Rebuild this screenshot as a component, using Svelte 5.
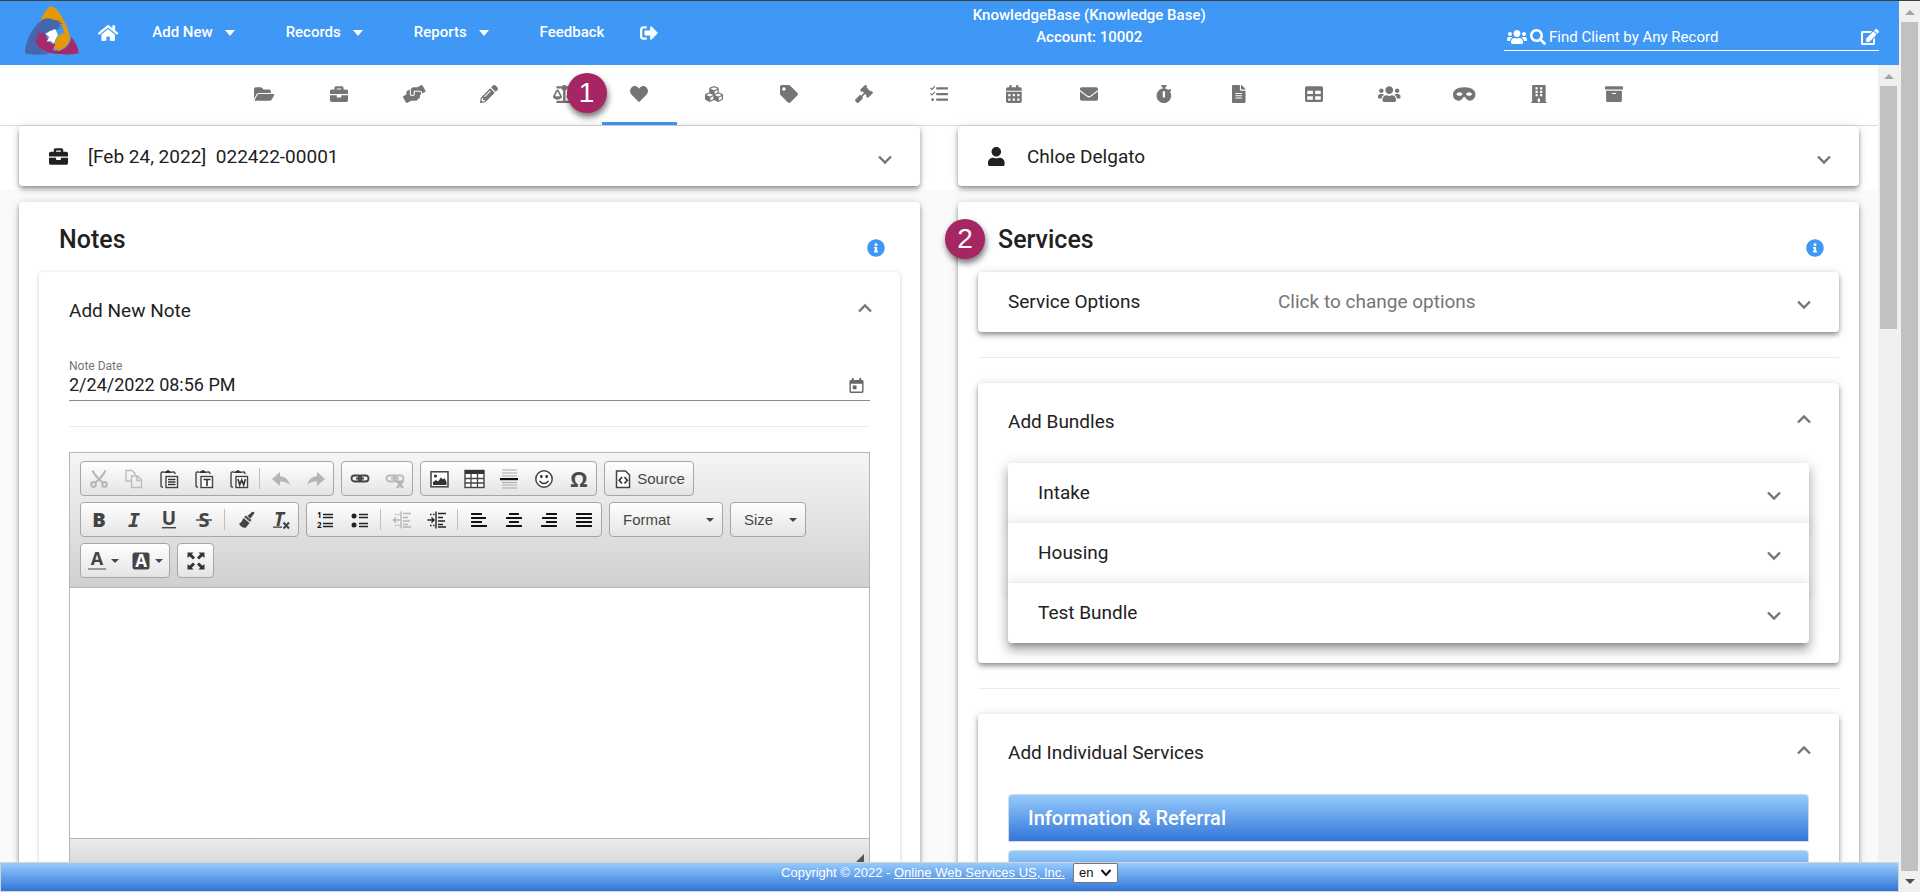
<script>
  const icons = {
    home: [576, 'M280.37 148.26L96 300.11V464a16 16 0 0 0 16 16l112.06-.29a16 16 0 0 0 15.92-16V368a16 16 0 0 1 16-16h64a16 16 0 0 1 16 16v95.64a16 16 0 0 0 16 16.05L464 480a16 16 0 0 0 16-16V300L295.67 148.26a12.19 12.19 0 0 0-15.3 0zM571.6 251.47L488 182.56V44.05a12 12 0 0 0-12-12h-56a12 12 0 0 0-12 12v72.61L318.47 43a48 48 0 0 0-61 0L4.34 251.47a12 12 0 0 0-1.6 16.9l25.5 31A12 12 0 0 0 45.15 301l235.22-193.74a12.19 12.19 0 0 1 15.3 0L530.9 301a12 12 0 0 0 16.9-1.6l25.5-31a12 12 0 0 0-1.7-16.93z'],
    signout: [512, 'M497 273L329 441c-15 15-41 4.5-41-17v-96H152c-13.3 0-24-10.7-24-24v-96c0-13.3 10.7-24 24-24h136V88c0-21.4 25.9-32 41-17l168 168c9.3 9.4 9.3 24.6 0 34zM192 436v-40c0-6.6-5.4-12-12-12H96c-17.7 0-32-14.3-32-32V160c0-17.7 14.3-32 32-32h84c6.6 0 12-5.4 12-12V76c0-6.6-5.4-12-12-12H96c-53 0-96 43-96 96v192c0 53 43 96 96 96h84c6.6 0 12-5.4 12-12z'],
    search: [512, 'M505 442.7L405.3 343c-4.5-4.5-10.6-7-17-7H372c27.6-35.3 44-79.7 44-128C416 93.1 322.9 0 208 0S0 93.1 0 208s93.1 208 208 208c48.3 0 92.7-16.4 128-44v16.3c0 6.4 2.5 12.5 7 17l99.7 99.7c9.4 9.4 24.6 9.4 33.9 0l28.3-28.3c9.4-9.4 9.4-24.6.1-34zM208 336c-70.7 0-128-57.2-128-128 0-70.7 57.2-128 128-128 70.7 0 128 57.2 128 128 0 70.7-57.2 128-128 128z'],
    edit: [576, 'M402.6 83.2l90.2 90.2c3.8 3.8 3.8 10 0 13.8L274.4 405.6l-92.8 10.3c-12.4 1.4-22.9-9.1-21.5-21.5l10.3-92.8L388.8 83.2c3.8-3.8 10-3.8 13.8 0zm162-22.9l-48.8-48.8c-15.2-15.2-39.9-15.2-55.2 0l-35.4 35.4c-3.8 3.8-3.8 10 0 13.8l90.2 90.2c3.8 3.8 10 3.8 13.8 0l35.4-35.4c15.2-15.3 15.2-40 0-55.2zM384 346.2V448H64V128h229.8c3.2 0 6.2-1.3 8.5-3.5l40-40c7.6-7.6 2.2-20.5-8.5-20.5H48C21.5 64 0 85.5 0 112v352c0 26.5 21.5 48 48 48h352c26.5 0 48-21.5 48-48V306.2c0-10.7-12.9-16-20.5-8.5l-40 40c-2.2 2.3-3.5 5.3-3.5 8.5z'],
    user: [448, 'M224 256c70.7 0 128-57.3 128-128S294.7 0 224 0 96 57.3 96 128s57.3 128 128 128zm89.6 32h-16.7c-22.2 10.2-46.9 16-72.9 16s-50.6-5.8-72.9-16h-16.7C60.2 288 0 348.2 0 422.4V464c0 26.5 21.5 48 48 48h352c26.5 0 48-21.5 48-48v-41.6c0-74.2-60.2-134.4-134.4-134.4z'],
    info: [512, 'M256 8C119.043 8 8 119.083 8 256c0 136.997 111.043 248 248 248s248-111.003 248-248C504 119.083 392.957 8 256 8zm0 110c23.196 0 42 18.804 42 42s-18.804 42-42 42-42-18.804-42-42 18.804-42 42-42zm56 254c0 6.627-5.373 12-12 12h-88c-6.627 0-12-5.373-12-12v-24c0-6.627 5.373-12 12-12h12v-64h-12c-6.627 0-12-5.373-12-12v-24c0-6.627 5.373-12 12-12h64c6.627 0 12 5.373 12 12v100h12c6.627 0 12 5.373 12 12v24z'],
    folder: [576, 'M572.694 292.093L500.27 416.248A63.997 63.997 0 0 1 444.989 448H45.025c-18.523 0-30.064-20.093-20.731-36.093l72.424-124.155A64 64 0 0 1 152 256h399.964c18.523 0 30.064 20.093 20.73 36.093zM152 224h328v-48c0-26.51-21.49-48-48-48H272l-64-64H48C21.49 64 0 85.49 0 112v278.046l69.077-118.418C86.214 242.25 117.989 224 152 224z'],
    briefcase: [512, 'M320 336c0 8.84-7.16 16-16 16h-96c-8.84 0-16-7.16-16-16v-48H0v144c0 25.6 22.4 48 48 48h416c25.6 0 48-22.4 48-48V288H320v48zm144-208h-80V80c0-25.6-22.4-48-48-48H176c-25.6 0-48 22.4-48 48v48H48c-25.6 0-48 22.4-48 48v80h512v-80c0-25.6-22.4-48-48-48zm-144 0H192V96h128v32z'],
    hands: [640, 'M488 192H336v56c0 39.7-32.3 72-72 72s-72-32.3-72-72V126.4l-64.9 39C107.8 176.9 96 197.8 96 220.2v47.3l-80 46.2C.7 322.5-4.6 342.1 4.3 357.4l80 138.6c8.8 15.3 28.4 20.5 43.7 11.7L231.4 448H368c35.3 0 64-28.7 64-64h16c17.7 0 32-14.3 32-32v-64h8c13.3 0 24-10.7 24-24v-48c0-13.3-10.7-24-24-24zm147.7-37.4L555.7 16C546.9.7 527.3-4.5 512 4.3L408.6 64H306.4c-12 0-23.7 3.4-33.9 9.7L239 94.6c-9.4 5.8-15 16.1-15 27.1V248c0 22.1 17.9 40 40 40s40-17.9 40-40v-88h184c30.9 0 56 25.1 56 56v28.5l80-46.2c15.3-8.9 20.5-28.4 11.7-43.7z'],
    pencil: [512, 'M497.9 142.1l-46.1 46.1c-4.7 4.7-12.3 4.7-17 0l-111-111c-4.7-4.7-4.7-12.3 0-17l46.1-46.1c18.7-18.7 49.1-18.7 67.9 0l60.1 60.1c18.8 18.7 18.8 49.1 0 67.9zM284.2 99.8L21.6 362.4.4 483.9c-2.9 16.4 11.4 30.6 27.8 27.8l121.5-21.3 262.6-262.6c4.7-4.7 4.7-12.3 0-17l-111-111c-4.8-4.7-12.4-4.7-17.1 0zM124.1 339.9c-5.5-5.5-5.5-14.3 0-19.8l154-154c5.5-5.5 14.3-5.5 19.8 0s5.5 14.3 0 19.8l-154 154c-5.5 5.5-14.3 5.5-19.8 0zM88 424h48v36.3l-64.5 11.3-31.1-31.1L51.7 376H88v48z'],
    scale: [640, 'M256 336h-.02c0-16.18 1.34-8.73-85.05-181.51-17.65-35.29-68.19-35.36-85.87 0C-2.06 328.75.02 320.33.02 336H0c0 44.18 57.31 80 128 80s128-35.82 128-80zM128 176l72 144H56l72-144zm511.98 160c0-16.18 1.34-8.73-85.05-181.51-17.65-35.29-68.19-35.36-85.87 0-87.12 174.26-85.04 165.84-85.04 181.51H384c0 44.18 57.31 80 128 80s128-35.82 128-80h-.02zM440 320l72-144 72 144H440zm88 128H352V153.25c23.51-10.29 41.16-31.48 46.39-57.25H528c8.84 0 16-7.16 16-16V48c0-8.84-7.16-16-16-16H383.64C369.04 12.68 346.09 0 320 0s-49.04 12.68-63.64 32H112c-8.84 0-16 7.16-16 16v32c0 8.84 7.16 16 16 16h129.61c5.23 25.76 22.87 46.96 46.39 57.25V448H112c-8.84 0-16 7.16-16 16v32c0 8.84 7.16 16 16 16h416c8.84 0 16-7.16 16-16v-32c0-8.84-7.16-16-16-16z'],
    heart: [512, 'M462.3 62.6C407.5 15.9 326 24.3 275.7 76.2L256 96.5l-19.7-20.3C186.1 24.3 104.5 15.9 49.7 62.6c-62.8 53.6-66.1 149.8-9.9 207.9l193.5 199.8c12.5 12.9 32.8 12.9 45.3 0l193.5-199.8c56.3-58.1 53-154.3-9.8-207.9z'],
    cubes: [512, 'M488.6 250.2L392 214V105.5c0-15-9.3-28.4-23.4-33.7l-100-37.5c-8.1-3.1-17.1-3.1-25.3 0l-100 37.5c-14.1 5.3-23.4 18.7-23.4 33.7V214l-96.6 36.2C9.3 255.5 0 268.9 0 283.9V394c0 13.6 7.7 26.1 19.9 32.2l100 50c10.1 5.1 22.1 5.1 32.2 0l103.9-52 103.9 52c10.1 5.1 22.1 5.1 32.2 0l100-50c12.2-6.1 19.9-18.6 19.9-32.2V283.9c0-15-9.3-28.4-23.4-33.7zM358 214.8l-85 31.9v-68.2l85-37v73.3zM154 104.1l102-38.2 102 38.2v.6l-102 41.4-102-41.4v-.6zm84 291.1l-85 42.5v-79.1l85-38.8v75.4zm0-112l-102 41.4-102-41.4v-.6l102-38.2 102 38.2v.6zm240 112l-85 42.5v-79.1l85-38.8v75.4zm0-112l-102 41.4-102-41.4v-.6l102-38.2 102 38.2v.6z'],
    tag: [512, 'M0 252.118V48C0 21.49 21.49 0 48 0h204.118a48 48 0 0 1 33.941 14.059l211.882 211.882c18.745 18.745 18.745 49.137 0 67.882L293.823 497.941c-18.745 18.745-49.137 18.745-67.882 0L14.059 286.059A48 48 0 0 1 0 252.118zM112 64c-26.51 0-48 21.49-48 48s21.49 48 48 48 48-21.49 48-48-21.49-48-48-48z'],
    gavel: [512, 'M504.971 199.362l-22.627-22.627c-9.373-9.373-24.569-9.373-33.941 0l-5.657 5.657L329.608 69.255l5.657-5.657c9.373-9.373 9.373-24.569 0-33.941L312.638 7.029c-9.373-9.373-24.569-9.373-33.941 0L154.246 131.48c-9.373 9.373-9.373 24.569 0 33.941l22.627 22.627c9.373 9.373 24.569 9.373 33.941 0l5.657-5.657 39.598 39.598-81.04 81.04-5.657-5.657c-12.497-12.497-32.758-12.497-45.255 0L9.373 412.118c-12.497 12.497-12.497 32.758 0 45.255l45.255 45.255c12.497 12.497 32.758 12.497 45.255 0l114.745-114.745c12.497-12.497 12.497-32.758 0-45.255l-5.657-5.657 81.04-81.04 39.598 39.598-5.657 5.657c-9.373 9.373-9.373 24.569 0 33.941l22.627 22.627c9.373 9.373 24.569 9.373 33.941 0l124.451-124.451c9.372-9.372 9.372-24.568 0-33.941z'],
    tasks: [512, 'M0 92l24-24 32 32 72-76 24 24-96 100zM0 252l24-24 32 32 72-76 24 24-96 100zM32 416a40 40 0 1 0 80 0a40 40 0 1 0-80 0zM192 64h304a16 16 0 0 1 16 16v32a16 16 0 0 1-16 16H192a16 16 0 0 1-16-16V80a16 16 0 0 1 16-16zM192 224h304a16 16 0 0 1 16 16v32a16 16 0 0 1-16 16H192a16 16 0 0 1-16-16v-32a16 16 0 0 1 16-16zM192 384h304a16 16 0 0 1 16 16v32a16 16 0 0 1-16 16H192a16 16 0 0 1-16-16v-32a16 16 0 0 1 16-16z'],
    calendar: [448, 'M0 160v-48a48 48 0 0 1 48-48h48V12a12 12 0 0 1 12-12h40a12 12 0 0 1 12 12v52h128V12a12 12 0 0 1 12-12h40a12 12 0 0 1 12 12v52h48a48 48 0 0 1 48 48v48zM0 192h448v272a48 48 0 0 1-48 48H48a48 48 0 0 1-48-48zM64 256v64h64v-64zM192 256v64h64v-64zM320 256v64h64v-64zM64 384v64h64v-64zM192 384v64h64v-64zM320 384v64h64v-64z'],
    envelope: [512, 'M502.3 190.8c3.9-3.1 9.7-.2 9.7 4.7V400c0 26.5-21.5 48-48 48H48c-26.5 0-48-21.5-48-48V195.6c0-5 5.7-7.8 9.7-4.7 22.4 17.4 52.1 39.5 154.1 113.6 21.1 15.4 56.7 47.8 92.2 47.6 35.7.3 72-32.8 92.3-47.6 102-74.1 131.6-96.3 154-113.7zM256 320c23.2.4 56.6-29.2 73.4-41.4 132.7-96.3 142.8-104.7 173.4-128.7 5.8-4.5 9.2-11.5 9.2-18.9v-19c0-26.5-21.5-48-48-48H48c-26.5 0-48 21.5-48 48v19c0 7.4 3.4 14.3 9.2 18.9 30.6 23.9 40.7 32.4 173.4 128.7 16.8 12.2 50.2 41.8 73.4 41.4z'],
    stopwatch: [448, 'M432 304c0 114.9-93.1 208-208 208S16 418.9 16 304c0-104 76.3-190.2 176-205.5V64h-28c-6.6 0-12-5.4-12-12V12c0-6.6 5.4-12 12-12h120c6.6 0 12 5.4 12 12v40c0 6.6-5.4 12-12 12h-28v34.5c37.5 5.8 71.7 21.6 99.7 44.6l27.5-27.5c4.7-4.7 12.3-4.7 17 0l28.3 28.3c4.7 4.7 4.7 12.3 0 17l-29.4 29.4-.6.6C419.7 223.3 432 262.2 432 304zm-176 36V188.5c0-6.6-5.4-12-12-12h-40c-6.6 0-12 5.4-12 12V340c0 6.6 5.4 12 12 12h40c6.6 0 12-5.4 12-12z'],
    file: [384, 'M224 136V0H24C10.7 0 0 10.7 0 24v464c0 13.3 10.7 24 24 24h336c13.3 0 24-10.7 24-24V160H248c-13.2 0-24-10.8-24-24zm64 236c0 6.6-5.4 12-12 12H108c-6.6 0-12-5.4-12-12v-8c0-6.6 5.4-12 12-12h168c6.6 0 12 5.4 12 12v8zm0-64c0 6.6-5.4 12-12 12H108c-6.6 0-12-5.4-12-12v-8c0-6.6 5.4-12 12-12h168c6.6 0 12 5.4 12 12v8zm0-72v8c0 6.6-5.4 12-12 12H108c-6.6 0-12-5.4-12-12v-8c0-6.6 5.4-12 12-12h168c6.6 0 12 5.4 12 12zm96-114.1v6.1H256V0h6.1c6.4 0 12.5 2.5 17 7l97.9 98c4.5 4.5 7 10.6 7 16.9z'],
    table: [512, 'M464 32H48C21.49 32 0 53.49 0 80v352c0 26.51 21.49 48 48 48h416c26.51 0 48-21.49 48-48V80c0-26.51-21.49-48-48-48zM224 416H64v-96h160v96zm0-160H64v-96h160v96zm224 160H288v-96h160v96zm0-160H288v-96h160v96z'],
    users: [640, 'M96 224c35.3 0 64-28.7 64-64s-28.7-64-64-64-64 28.7-64 64 28.7 64 64 64zm448 0c35.3 0 64-28.7 64-64s-28.7-64-64-64-64 28.7-64 64 28.7 64 64 64zm32 32h-64c-17.6 0-33.5 7.1-45.1 18.6 40.3 22.1 68.9 62 75.1 109.4h66c17.7 0 32-14.3 32-32v-32c0-35.3-28.7-64-64-64zm-256 0c61.9 0 112-50.1 112-112S381.9 32 320 32 208 82.1 208 144s50.1 112 112 112zm76.8 32h-8.3c-20.8 10-43.9 16-68.5 16s-47.6-6-68.5-16h-8.3C179.6 288 128 339.6 128 403.2V432c0 26.5 21.5 48 48 48h288c26.5 0 48-21.5 48-48v-28.8c0-63.6-51.6-115.2-115.2-115.2zm-223.7-13.4C161.5 263.1 145.6 256 128 256H64c-35.3 0-64 28.7-64 64v32c0 17.7 14.3 32 32 32h65.9c6.3-47.4 34.9-87.3 75.2-109.4z'],
    mask: [640, 'M320.67 64c-442.6 0-357.57 384-158.46 384 39.9 0 77.47-20.69 101.42-55.86l25.73-37.79c15.66-22.99 46.97-22.99 62.63 0l25.73 37.79C401.66 427.31 439.23 448 479.13 448c189.86 0 290.63-384-158.46-384zM184 308.36c-41.06 0-67.76-25.66-80.08-41.05-5.23-6.53-5.23-16.09 0-22.63 12.32-15.4 39.01-41.05 80.08-41.05s67.76 25.66 80.08 41.05c5.23 6.53 5.23 16.09 0 22.63-12.32 15.4-39.02 41.05-80.08 41.05zm272 0c-41.06 0-67.76-25.66-80.08-41.05-5.23-6.53-5.23-16.09 0-22.63 12.32-15.4 39.01-41.05 80.08-41.05s67.76 25.66 80.08 41.05c5.23 6.53 5.23 16.09 0 22.63-12.32 15.4-39.02 41.05-80.08 41.05z'],
    building: [448, 'M436 480h-20V24a24 24 0 0 0-24-24H56a24 24 0 0 0-24 24v456H12a12 12 0 0 0-12 12v20h448v-20a12 12 0 0 0-12-12zM128 64h64v64h-64zM256 64h64v64h-64zM128 160h64v64h-64zM256 160h64v64h-64zM128 256h64v64h-64zM256 256h64v64h-64zM192 384h64v96h-64z'],
    archive: [512, 'M32 448c0 17.7 14.3 32 32 32h384c17.7 0 32-14.3 32-32V160H32v288zm160-212c0-6.6 5.4-12 12-12h104c6.6 0 12 5.4 12 12v8c0 6.6-5.4 12-12 12H204c-6.6 0-12-5.4-12-12v-8zM480 32H32C14.3 32 0 46.3 0 64v48c0 8.8 7.2 16 16 16h480c8.8 0 16-7.2 16-16V64c0-17.7-14.3-32-32-32z'],
  };

  const tabs = ['folder', 'briefcase', 'hands', 'pencil', 'scale', 'heart', 'cubes', 'tag', 'gavel', 'tasks', 'calendar', 'envelope', 'stopwatch', 'file', 'table', 'users', 'mask', 'building', 'archive'];
  const menus = ['Add New', 'Records', 'Reports'];
  const bundles = ['Intake', 'Housing', 'Test Bundle'];

  const clip = '<path d="M5 3H3.500Q2 3 2 4.500V17M13 3h1.500Q16 3 16 4.500V5M2 17q0 1 1 1h1" fill="none" stroke="#444" stroke-width="1.400"/><path d="M5 4q0-2 2.500-2 1.500-2 3 0Q13 2 13 4z" fill="#333"/><rect x="7" y="7.500" width="11.500" height="11" fill="#fff" stroke="#444" stroke-width="1.400"/>';
  const lines = (rows) => rows.map(([x, y, w]) => `<rect x="${x}" y="${y}" width="${w}" height="2" rx="0.500" fill="#111"/>`).join('');
  const link = (c) => `<g fill="none" stroke="${c}" stroke-width="1.800"><rect x="1.500" y="6.500" width="10" height="6" rx="3"/><rect x="8.500" y="6.500" width="10" height="6" rx="3"/></g><path d="M6 9.500h8" stroke="${c}" stroke-width="1.800"/>`;
  const dent = (c, arrow) => `<g stroke="${c}" stroke-width="1.400" fill="none"><path d="M9 1.500v17"/><path d="M3 4.500h5M3 15.500h5" stroke-dasharray="1.500 1.500"/><path d="M11 3.500h8M11 7.500h5M11 11h7M11 14.500h5M11 17h8"/>${arrow}</g>`;

  const art = {
    Cut: '<g fill="none" stroke="#b8b8b8" stroke-width="2.200"><circle cx="4.500" cy="15.500" r="2.300"/><circle cx="15.500" cy="15.500" r="2.300"/><path d="M3.500 1.500Q6 7 14 14M16.500 1.500Q14 7 6 14"/></g>',
    Copy: '<g fill="none" stroke="#bbb" stroke-width="1.400"><path d="M7 12H2V1.500h6l3 3V6"/><path d="M7.500 7h6l4 4v7.500h-10z"/><path d="M13 7v4.500h4.500"/></g>',
    Paste: clip + '<path d="M9 10.500h7.500M9 13h7.500M9 15.500h7.500" stroke="#333" stroke-width="1.300"/>',
    'Paste as plain text': clip + '<path d="M9.500 10.500h7M13 10.500v6.500" stroke="#333" stroke-width="1.600"/>',
    'Paste from Word': clip + '<path d="M9 10l1.700 6 2-5 2 5 1.800-6" fill="none" stroke="#333" stroke-width="1.600"/>',
    Undo: '<path d="M1 10l8-7v4q8 1 10 9-4-4-10-3.500V17z" fill="#b5b5b5"/>',
    Redo: '<path d="M19 10l-8-7v4q-8 1-10 9 4-4 10-3.500V17z" fill="#b5b5b5"/>',
    Link: link('#444'),
    Unlink: link('#bbb') + '<path d="M12 12l6 7M18 12l-6 7" stroke="#b0b0b0" stroke-width="2"/>',
    Image: '<rect x="2" y="2.800" width="17" height="15" fill="#fff" stroke="#444" stroke-width="1.500"/><circle cx="6.500" cy="7" r="1.600" fill="#333"/><path d="M4 16v-3l3-2 2 1.500 3-4 2 2 1.500-1.500L17.500 13v3z" fill="#333"/>',
    Table: '<rect x="1" y="1.500" width="19" height="17" fill="#fff" stroke="#444" stroke-width="1.400"/><rect x="1" y="1" width="19" height="4" fill="#333"/><path d="M1 9.500h19M1 14h19M7 5v14M13.500 5v14" stroke="#444" stroke-width="1.300"/>',
    'Horizontal line': '<path d="M3 1h15M3 4h15M3 7h15M3 13.500h15M3 16h15M3 19h15" stroke="#aaa" stroke-width="1.200"/><rect x="1" y="9" width="18" height="2.200" fill="#111"/>',
    Smiley: '<circle cx="10" cy="10" r="8.200" fill="#fff" stroke="#444" stroke-width="1.500"/><ellipse cx="7.300" cy="7.500" rx="1.300" ry="1.700" fill="#333"/><ellipse cx="12.700" cy="7.500" rx="1.300" ry="1.700" fill="#333"/><path d="M5.500 12q4.500 5 9 0" fill="none" stroke="#333" stroke-width="1.400"/>',
    'Special character': '<text x="10" y="18" text-anchor="middle" font-family="Open Sans, sans-serif" font-weight="700" font-size="22" fill="#4a4a4a">Ω</text>',
    Source: '<path d="M3.500 2h9l4 4v12.500h-13z" fill="#fff" stroke="#444" stroke-width="1.500"/><path d="M9 8l-2.800 3.200L9 14.500M11.500 8l2.800 3.200-2.800 3.300" fill="none" stroke="#333" stroke-width="1.700"/>',
    Bold: '<text x="10" y="17" text-anchor="middle" font-family="Open Sans, sans-serif" font-weight="800" font-size="20" fill="#444">B</text>',
    Italic: '<text x="10" y="17" text-anchor="middle" font-family="DejaVu Sans Mono, monospace" font-weight="700" font-style="italic" font-size="20" fill="#444">I</text>',
    Underline: '<text x="10" y="15" text-anchor="middle" font-family="Open Sans, sans-serif" font-weight="700" font-size="19" fill="#444">U</text><rect x="3" y="17" width="14" height="1.400" fill="#444"/>',
    Strike: '<text x="10" y="17" text-anchor="middle" font-family="Open Sans, sans-serif" font-weight="700" font-size="20" fill="#444">S</text><rect x="2" y="9.300" width="16" height="1.400" fill="#444"/>',
    'Copy formatting': '<path d="M16 2q2-1 2.500 1l-4 5.500-3-2.500z" fill="#444"/><path d="M10 5.500l5.500 4.500-1.500 2-6-5z" fill="#555"/><path d="M7.500 8l6 5-3.500 4.500q-4 1-7-3.500 3-2 4.500-6z" fill="#444"/>',
    'Remove format': '<text x="8" y="15.500" text-anchor="middle" font-family="Open Sans, sans-serif" font-style="italic" font-weight="700" font-size="19" fill="#444">T</text><rect x="2" y="16.500" width="9" height="1.300" fill="#444"/><path d="M12.500 12.500l5.500 6M18 12.500l-5.500 6" stroke="#444" stroke-width="2"/>',
    'Numbered list': '<text x="2" y="8" font-family="Open Sans, sans-serif" font-weight="700" font-size="8" fill="#111">1</text><text x="2" y="18" font-family="Open Sans, sans-serif" font-weight="700" font-size="8" fill="#111">2</text><path d="M8 4.500h10M8 7.500h10M8 13.500h10M8 16.500h10" stroke="#222" stroke-width="1.500"/>',
    'Bulleted list': '<circle cx="4" cy="6" r="2.500" fill="#222"/><circle cx="4" cy="15" r="2.500" fill="#222"/><path d="M9 4.500h9M9 7.500h9M9 13.500h9M9 16.500h9" stroke="#222" stroke-width="1.500"/>',
    Outdent: dent('#b5b5b5', '<path d="M8 10H1.500M4 7.500L1.500 10 4 12.500"/>'),
    Indent: dent('#222', '<path d="M0.500 10H7M4.500 7.500L7 10l-2.500 2.500"/>'),
    'Align left': lines([[2, 3, 11], [2, 7, 15], [2, 11, 11], [2, 15, 16]]),
    Center: lines([[5, 3, 10], [2, 7, 16], [5, 11, 10], [2, 15, 16]]),
    'Align right': lines([[7, 3, 11], [3, 7, 15], [7, 11, 11], [2, 15, 16]]),
    Justify: lines([[2, 3, 16], [2, 7, 16], [2, 11, 16], [2, 15, 16]]),
    Maximize: '<g fill="#333"><path d="M1.500 1.500h6L5.800 3.300 9 6.500 7 8.500 3.500 5.200 1.500 7zM18.500 1.500h-6l1.700 1.800L11 6.500l2 2 3.500-3.300 2 1.800zM1.500 18.500h6l-1.700-1.800L9 13.500l-2-2-3.500 3.300-2-1.800zM18.500 18.500h-6l1.700-1.800-3.200-3.200 2-2 3.500 3.300 2-1.800z"/></g>',
    'Text color': '<text x="10" y="14" text-anchor="middle" font-family="Open Sans, sans-serif" font-weight="700" font-size="18" fill="#444">A</text><rect x="1" y="17" width="18" height="2" fill="#999"/>',
    'Background color': '<rect x="1.500" y="1.500" width="17" height="17" rx="2.500" fill="#444"/><text x="10" y="16" text-anchor="middle" font-family="Open Sans, sans-serif" font-weight="700" font-size="17" fill="#fff">A</text>',
  };

  const clipboard = ['Cut', 'Copy', 'Paste', 'Paste as plain text', 'Paste from Word', '|', 'Undo', 'Redo'];
  const links = ['Link', 'Unlink'];
  const inserts = ['Image', 'Table', 'Horizontal line', 'Smiley', 'Special character'];
  const styles = ['Bold', 'Italic', 'Underline', 'Strike', '|', 'Copy formatting', 'Remove format'];
  const paragraph = ['Numbered list', 'Bulleted list', '|', 'Outdent', 'Indent', '|', 'Align left', 'Center', 'Align right', 'Justify'];

  let noteDate = $state('2/24/2022 08:56 PM');
  let client = $state('');
</script>

{#snippet fa(name, size)}
  <svg class="fa {size}" viewBox="0 0 {icons[name][0]} 512" aria-hidden="true"><path fill-rule="evenodd" d={icons[name][1]} /></svg>
{/snippet}

{#snippet chevron(open)}
  <svg class="chevron" class:open viewBox="0 0 14 20" aria-hidden="true"><path d="M1 9.500l6 6 6-6" /></svg>
{/snippet}

{#snippet tool(name)}
  <svg class="tool" viewBox="0 0 20 20" aria-hidden="true">{@html art[name]}</svg>
{/snippet}

{#snippet group(items)}
  <div class="group">
    {#each items as item}
      {#if item === '|'}
        <span class="sep"></span>
      {:else}
        <button class="tb" aria-label={item}>{@render tool(item)}</button>
      {/if}
    {/each}
  </div>
{/snippet}

<div class="window">
  <div class="app">
    <header class="top">
      <svg class="logo" viewBox="0 0 168 150" role="img" aria-label="Logo">
        <path d="M81 4C72 5 58 26 48 50L90 46 112 60 118 72 122 84C108 84 98 100 94 108L90 130 96 136 106 128 102 138 110 138 118 128 124 126C134 116 138 106 138 98C132 62 104 8 81 4z" fill="#e59a05" />
        <path d="M3 143C2 118 22 66 54 45C66 38 80 40 92 45L110 48 102 52 118 54 104 59 116 64 100 66 110 72 92 72C84 72 76 82 66 92L40 112C46 130 60 140 74 147C46 150 10 150 3 143z" fill="#4568ad" />
        <path d="M164 143C164 128 152 108 142 96C140 112 132 122 120 132L104 138 86 136 94 116C82 118 74 112 68 96L50 74 56 92 40 76 48 98 33 86 44 106 33 100C32 118 50 132 68 142C96 150 160 150 164 143z" fill="#a62a69" />
        <path d="M78 78L94 73 102 90 94 104 90 116 80 108 68 110 76 96 64 86z" fill="#fff" />
      </svg>
      <nav class="nav" aria-label="Main">
        <a class="home" href="#home" aria-label="Home">{@render fa('home', 's18')}</a>
        {#each menus as menu}
          <button class="menu">{menu}<span class="caret"></span></button>
        {/each}
        <a class="feedback" href="#feedback">Feedback</a>
        <a class="out" href="#logout" aria-label="Log out">{@render fa('signout', 's18')}</a>
      </nav>
      <div class="account">KnowledgeBase (Knowledge Base)<br />Account: 10002</div>
      <div class="search">
        <label for="client" aria-label="Find client">{@render fa('users', 's16')}{@render fa('search', 's16')}</label>
        <input id="client" type="text" placeholder="Find Client by Any Record" bind:value={client} />
        <button class="edit" aria-label="Edit search">{@render fa('edit', 's16')}</button>
      </div>
    </header>

    <div class="body">
      <div class="page">
        <nav class="tabs" aria-label="Sections">
          {#each tabs as tab}
            <a href="#{tab}" class="tab" class:active={tab === 'heart'} aria-label={tab}>
              {@render fa(tab, 's18')}
              {#if tab === 'heart'}<span class="badge on-tab">1</span>{/if}
            </a>
          {/each}
        </nav>

        <div class="strip">
          <button class="card head">
            <span class="head-icon">{@render fa('briefcase', 's19')}</span>
            <span class="label">[Feb 24, 2022]&nbsp; 022422-00001</span>
            {@render chevron(false)}
          </button>
          <button class="card head">
            <span class="head-icon">{@render fa('user', 's19')}</span>
            <span class="label">Chloe Delgato</span>
            {@render chevron(false)}
          </button>
        </div>

        <main class="columns">
          <section class="card column">
            <div class="title"><h2>Notes</h2><button class="info" aria-label="About notes">{@render fa('info', 's18')}</button></div>
            <div class="panel flat">
              <button class="panel-head tall"><span class="label">Add New Note</span>{@render chevron(true)}</button>
              <div class="panel-body">
                <div class="field">
                  <label for="note-date">Note Date</label>
                  <div class="field-row">
                    <input id="note-date" type="text" bind:value={noteDate} />
                    <button class="pick" aria-label="Open calendar">
                      <svg viewBox="0 0 16 16" aria-hidden="true"><path fill-rule="evenodd" d="M3 0h2v2h6V0h2v2h1q1.500 0 1.500 1.500v11Q15.500 16 14 16H2Q.5 16 .5 14.500v-11Q.5 2 2 2h1zM2 6v8.500h12V6zM4 8h4v4H4z" /></svg>
                    </button>
                  </div>
                </div>
                <hr />
                <div class="editor">
                  <div class="toolbar">
                    {@render group(clipboard)}
                    {@render group(links)}
                    {@render group(inserts)}
                    <div class="group"><button class="tb source">{@render tool('Source')}Source</button></div>
                    {@render group(styles)}
                    {@render group(paragraph)}
                    <div class="group combo format">
                      <select aria-label="Paragraph format"><option>Format</option></select><span class="tick"></span>
                    </div>
                    <div class="group combo size">
                      <select aria-label="Font size"><option>Size</option></select><span class="tick"></span>
                    </div>
                    <div class="group">
                      <button class="tb color" aria-label="Text color">{@render tool('Text color')}<span class="tick"></span></button>
                      <button class="tb color" aria-label="Background color">{@render tool('Background color')}<span class="tick"></span></button>
                    </div>
                    {@render group(['Maximize'])}
                  </div>
                  <textarea aria-label="Note text"></textarea>
                  <div class="bottom"><span class="resizer"></span></div>
                </div>
              </div>
            </div>
          </section>

          <section class="card column">
            <span class="badge on-card">2</span>
            <div class="title"><h2>Services</h2><button class="info" aria-label="About services">{@render fa('info', 's18')}</button></div>
            <div class="panel">
              <button class="panel-head">
                <span class="label option">Service Options</span>
                <span class="label hint">Click to change options</span>
                {@render chevron(false)}
              </button>
            </div>
            <div class="rule"><hr /></div>
            <div class="panel">
              <button class="panel-head tall"><span class="label">Add Bundles</span>{@render chevron(true)}</button>
              <div class="panel-body">
                <div class="list">
                  {#each bundles as bundle}
                    <button class="panel-head item"><span class="label">{bundle}</span>{@render chevron(false)}</button>
                  {/each}
                </div>
              </div>
            </div>
            <div class="rule"><hr /></div>
            <div class="panel">
              <button class="panel-head tall"><span class="label">Add Individual Services</span>{@render chevron(true)}</button>
              <div class="panel-body services">
                <button class="service">Information &amp; Referral</button>
                <button class="service" aria-label="Next service group"></button>
              </div>
            </div>
          </section>
        </main>
      </div>
      <div class="bar inner" aria-hidden="true"><i class="up"></i><i class="thumb"></i></div>
    </div>

    <footer>
      <span>Copyright © 2022 - <a href="#company">Online Web Services US, Inc.</a></span>
      <label><select aria-label="Language"><option>en</option></select>
        <svg viewBox="0 0 12 10" aria-hidden="true"><path d="M1.500 2l4.500 5 4.500-5" /></svg></label>
    </footer>
  </div>
  <div class="bar outer" aria-hidden="true"><i class="up"></i><i class="thumb"></i><i class="down"></i></div>
</div>

<style>
  :global(body) {
    margin: 0;
    background: #fafafa;
  }
  .window {
    --z4: 0 2px 4px -1px rgba(0, 0, 0, 0.3), 0 4px 5px rgba(0, 0, 0, 0.18), 0 1px 10px rgba(0, 0, 0, 0.15);
    --z8: 0 5px 5px -3px rgba(0, 0, 0, 0.25), 0 8px 10px 1px rgba(0, 0, 0, 0.18), 0 3px 14px 2px rgba(0, 0, 0, 0.15);
    display: flex;
    height: 100vh;
    box-sizing: border-box;
    border-top: 1px solid #3c4043;
    overflow: hidden;
    font-family: Roboto, 'Liberation Sans', sans-serif;
    color: #212121;
  }
  .window * {
    box-sizing: border-box;
  }
  button,
  input,
  select,
  textarea {
    margin: 0;
    padding: 0;
    border: 0;
    background: none;
    font: inherit;
    color: inherit;
    outline: none;
  }
  a {
    color: inherit;
  }
  hr {
    margin: 0;
    border: 0;
    border-top: 1px solid #ebebeb;
  }
  .app {
    flex: 1;
    min-width: 0;
    display: flex;
    flex-direction: column;
  }
  .fa {
    display: block;
    fill: currentColor;
    overflow: visible;
  }
  .s16 { height: 16px; }
  .s18 { height: 18px; }
  .s19 { height: 19px; }

  .top {
    display: flex;
    align-items: center;
    height: 64px;
    flex: none;
    padding: 0 20px 0 24px;
    background: #3f97f6;
    color: #fff;
    font-size: 15px;
    font-weight: 500;
  }
  .logo {
    width: 56px;
    height: 50px;
    margin-bottom: 7px;
  }
  .nav {
    display: flex;
    align-items: center;
    padding-left: 18px;
  }
  .nav a {
    text-decoration: none;
  }
  .home {
    padding-right: 34px;
  }
  .menu {
    display: flex;
    align-items: center;
    gap: 12px;
    padding: 0 51px 2px 0;
  }
  .feedback {
    padding-bottom: 2px;
  }
  .caret {
    border: 5px solid transparent;
    border-top: 6px solid #fff;
    border-bottom: 0;
    margin-top: 2px;
  }
  .out {
    padding-left: 36px;
  }
  .account {
    flex: 1;
    padding-left: 16px;
    margin-bottom: 14px;
    text-align: center;
    line-height: 22px;
  }
  .search {
    display: flex;
    align-items: center;
    width: 375px;
    height: 28px;
    margin-top: 8px;
    border-bottom: 1px solid #fff;
    font-weight: 400;
  }
  .search label {
    display: flex;
    gap: 3px;
    padding: 0 3px;
  }
  .search input {
    flex: 1;
    min-width: 0;
  }
  .search input::placeholder {
    color: #fff;
    opacity: 1;
  }

  .body {
    flex: 1;
    min-height: 0;
    display: flex;
  }
  .page {
    flex: 1;
    min-width: 0;
    overflow: hidden;
    background: #fafafa;
  }
  .tabs {
    display: flex;
    justify-content: center;
    height: 61px;
    background: #fff;
    border-bottom: 1px solid #dcdcdc;
    color: #757575;
  }
  .tab {
    position: relative;
    display: flex;
    align-items: center;
    justify-content: center;
    width: 75px;
    padding-top: 1px;
    border-bottom: 3px solid transparent;
    color: #757575;
    text-decoration: none;
  }
  .active {
    border-bottom-color: #3f97f6;
  }
  .badge {
    position: absolute;
    width: 40px;
    height: 40px;
    border-radius: 50%;
    background: #a52663;
    color: #fff;
    font: 28px/40px 'Liberation Sans', Arial, sans-serif;
    text-align: center;
    box-shadow: 1px 4px 6px rgba(0, 0, 0, 0.55);
  }
  .on-tab {
    left: -35px;
    top: 8px;
  }
  .on-card {
    left: -13px;
    top: 17px;
  }

  .strip,
  .columns {
    display: grid;
    grid-template-columns: 1fr 1fr;
    gap: 38px;
    padding: 0 19px;
  }
  .strip {
    height: 64px;
    background: #fff;
  }
  .columns {
    padding-top: 12px;
    align-items: start;
  }
  .card {
    position: relative;
    background: #fff;
    border-radius: 4px;
    box-shadow: var(--z4);
  }
  .head {
    display: flex;
    align-items: center;
    height: 60px;
    padding: 1px 28px 0 30px;
  }
  .head-icon {
    width: 39px;
  }
  .label {
    font-size: 19px;
    line-height: 24px;
    font-weight: 400;
  }
  .chevron {
    width: 14px;
    height: 20px;
    margin-left: auto;
    fill: none;
    stroke: #757575;
    stroke-width: 2.4;
  }
  .chevron.open {
    transform: rotate(180deg);
  }
  .column {
    padding: 0 20px 20px;
  }
  .title {
    display: flex;
    align-items: flex-end;
    justify-content: space-between;
    height: 70px;
    padding: 0 15px 15px 20px;
  }
  h2 {
    margin: 0 0 1px;
    font-size: 25px;
    line-height: 32px;
    font-weight: 500;
  }
  .info {
    color: #3f97f6;
  }
  .panel {
    background: #fff;
    border-radius: 4px;
    box-shadow: var(--z4);
  }
  .flat {
    box-shadow: 0 1px 4px rgba(0, 0, 0, 0.2);
  }
  .panel-head {
    display: flex;
    align-items: center;
    width: 100%;
    height: 60px;
    padding: 0 28px 0 30px;
    text-align: left;
  }
  .tall {
    height: 78px;
  }
  .option {
    width: 270px;
  }
  .hint {
    color: #757575;
  }
  .panel-body {
    padding: 2px 30px 20px;
  }
  .rule {
    padding: 25px 0;
  }
  .list {
    border-radius: 4px;
  }
  .item {
    background: #fff;
    box-shadow: var(--z8);
  }
  .item:first-child {
    border-radius: 4px 4px 0 0;
  }
  .item:last-child {
    border-radius: 0 0 4px 4px;
  }
  .services {
    display: grid;
    gap: 8px;
  }
  .service {
    height: 48px;
    padding: 0 19px;
    border: 1px solid #d3dbe6;
    border-radius: 4px 4px 0 0;
    background: linear-gradient(#96cbfd, #3175d7);
    color: #fff;
    font-size: 20px;
    font-weight: 500;
    text-align: left;
  }

  .field {
    padding: 7px 0 3px;
    border-bottom: 1px solid #8c8c8c;
  }
  .field label {
    display: block;
    font-size: 12px;
    line-height: 14px;
    color: #757575;
  }
  .field-row {
    display: flex;
    align-items: center;
    height: 24px;
    padding-right: 6px;
  }
  .field input {
    flex: 1;
    min-width: 0;
    font-size: 18px;
    line-height: 24px;
  }
  .pick svg {
    display: block;
    width: 15px;
    height: 15px;
    fill: #666;
  }
  .panel-body > hr {
    margin: 25px 0;
  }
  .editor {
    border: 1px solid #b6b6b6;
    font-family: 'Liberation Sans', Arial, sans-serif;
    color: #474747;
  }
  .toolbar {
    display: flex;
    flex-wrap: wrap;
    gap: 6px 7px;
    padding: 8px 10px 9px;
    border-bottom: 1px solid #b6b6b6;
    background: linear-gradient(#f5f5f5, #cfd1cf);
  }
  .group {
    display: flex;
    height: 35px;
    border: 1px solid #a6a6a6;
    border-radius: 4px;
    background: linear-gradient(#fff, #e4e4e4);
    font-size: 15px;
  }
  .tb {
    display: flex;
    align-items: center;
    justify-content: center;
    gap: 4px;
    width: 35px;
  }
  .tool {
    width: 20px;
    height: 20px;
    flex: none;
    overflow: visible;
  }
  .source {
    width: 88px;
  }
  .color {
    width: 44px;
  }
  .sep {
    width: 1px;
    margin: 6px 3px;
    background: #c0c0c0;
  }
  .tick {
    border: 4px solid transparent;
    border-top-color: #474747;
    border-bottom: 0;
  }
  .combo {
    align-items: center;
    padding: 0 8px 0 13px;
  }
  .combo select {
    flex: 1;
    appearance: none;
  }
  .format { width: 114px; }
  .size { width: 76px; }
  textarea {
    display: block;
    width: 100%;
    height: 250px;
    resize: none;
    background: #fff;
  }
  .bottom {
    display: flex;
    justify-content: flex-end;
    align-items: flex-end;
    height: 36px;
    padding: 0 5px 8px;
    border-top: 1px solid #b6b6b6;
    background: linear-gradient(#ebebeb, #cfd1cf);
  }
  .resizer {
    border: 6px solid transparent;
    border-right-color: #555;
    border-bottom-color: #555;
  }

  .bar {
    display: flex;
    flex-direction: column;
    align-items: center;
    width: 21px;
    flex: none;
    background: #f0f0f0;
  }
  .bar i {
    display: block;
  }
  .up,
  .down {
    border: 5px solid transparent;
  }
  .up {
    border-top: 0;
    border-bottom-color: #a3a3a3;
    margin: 9px 0 7px;
  }
  .down {
    border-bottom: 0;
    border-top-color: #505050;
    margin: 8px 0;
  }
  .thumb {
    width: 17px;
    background: #c1c1c1;
  }
  .inner .thumb {
    height: calc(30% + 4px);
  }
  .outer .thumb {
    flex: 1;
  }

  footer {
    display: flex;
    flex: none;
    justify-content: center;
    gap: 8px;
    height: 30px;
    border: 1px solid #d3d3d3;
    background: linear-gradient(#96cbfd, #3175d7);
    color: #fff;
    font: 13px/20px 'Liberation Sans', Arial, sans-serif;
  }
  footer label {
    display: flex;
    align-items: center;
    width: 45px;
    height: 20px;
    padding: 0 5px;
    border: 1px solid #767676;
    border-radius: 2px;
    background: #fff;
    color: #111;
  }
  footer select {
    flex: 1;
    min-width: 0;
    appearance: none;
  }
  footer svg {
    width: 12px;
    height: 10px;
    fill: none;
    stroke: #111;
    stroke-width: 2;
  }
</style>
